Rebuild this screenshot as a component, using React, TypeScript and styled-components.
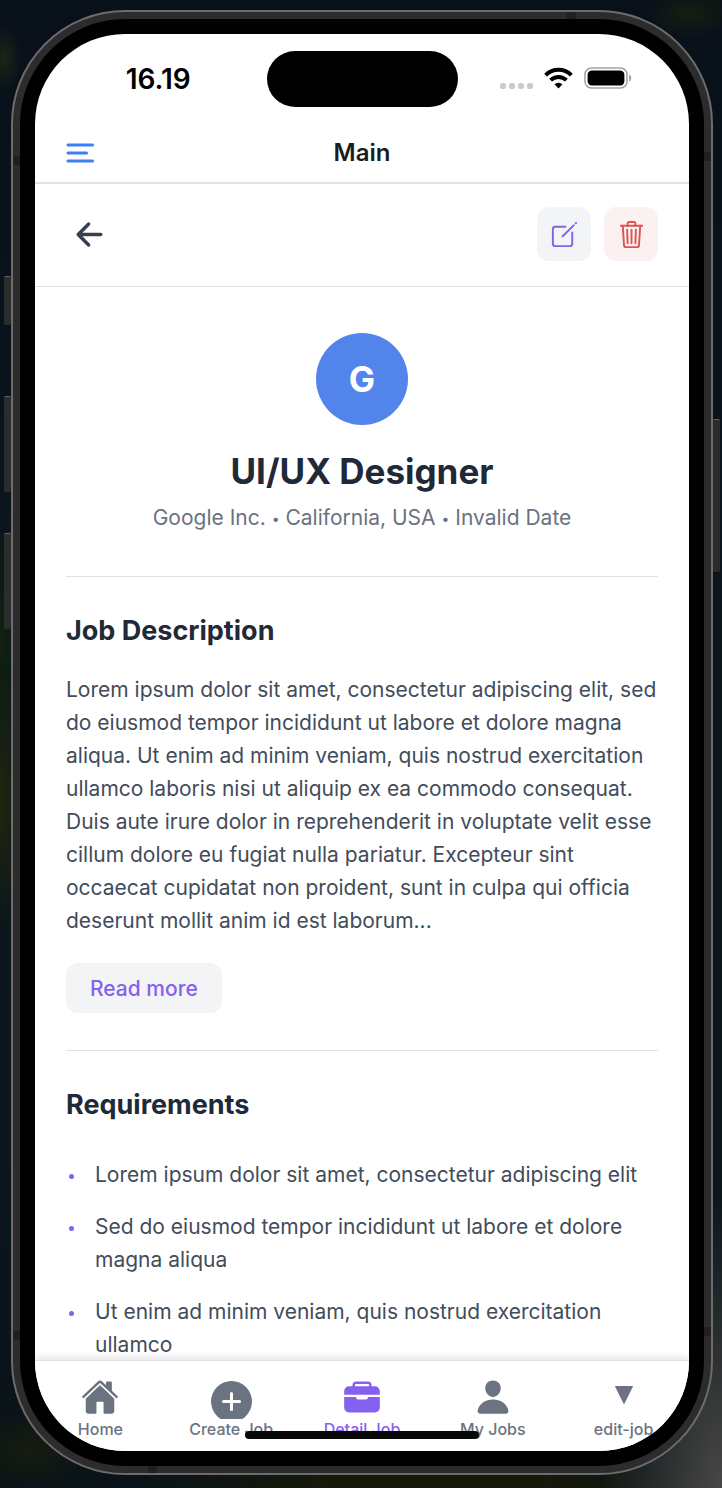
import React from "react";
import styled, { createGlobalStyle } from "styled-components";
import {
  IoArrowBack,
  IoBriefcase,
  IoCreateOutline,
  IoHome,
  IoPerson,
  IoTrashOutline,
} from "react-icons/io5";

const color = {
  ink: "#1f2937",
  body: "#424c5b",
  muted: "#6b7280",
  accent: "#8660ee",
  soft: "#f2f4f6",
  line: "#e0e2e6",
};

const GlobalStyle = createGlobalStyle`
  *, *::before, *::after { box-sizing: border-box; }
  body {
    margin: 0;
    font-family: Inter, "Liberation Sans", sans-serif;
    color: ${color.ink};
    background: #0a131a;
  }
  h1, h2, p, ul { margin: 0; padding: 0; }
  button { font: inherit; border: 0; padding: 0; cursor: pointer; }
`;

const Desktop = styled.div`
  height: 100vh;
  min-height: 900px;
  padding: 10px 9px 13px 11px;
  overflow: hidden;
  background:
    radial-gradient(ellipse 18px 34px at 4px 58px, #1a2615, transparent),
    radial-gradient(ellipse 46px 26px at 690px 14px, #171e10, transparent),
    radial-gradient(ellipse 26px 130px at 0 800px, #20260d, transparent),
    radial-gradient(ellipse 22px 110px at 0 640px, #10210f, transparent),
    radial-gradient(ellipse 60px 40px at 30px 1450px, #161c0d, transparent),
    radial-gradient(ellipse 120px 300px at 100% 100%, #484746, transparent),
    linear-gradient(90deg, transparent 20%, #16190a 45%, #16190a 75%, transparent) bottom / 100% 14px no-repeat,
    linear-gradient(#08101a, #0c171c 50%, #0a1418);
`;

const Frame = styled.div`
  position: relative;
  height: 100%;
  padding: 7px;
  border: 2px solid #6c6c6c;
  border-radius: 114px;
  background: #2c2c2c;
`;

const SideKey = styled.span<{ $side: "left" | "right"; $top: number; $length: number }>`
  position: absolute;
  ${(p) => p.$side}: -9px;
  top: ${(p) => p.$top}px;
  width: 7px;
  height: ${(p) => p.$length}px;
  border-top: 1px solid #666;
  border-radius: 2px;
  background: #2b2c2c;
`;

const Band = styled.span<{ $edge: "top" | "bottom" | "left" | "right"; $from: "top" | "bottom" | "left" | "right"; $at: number }>`
  position: absolute;
  ${(p) => p.$edge}: 0;
  ${(p) => p.$from}: ${(p) => p.$at}px;
  width: ${(p) => (p.$edge === "top" || p.$edge === "bottom" ? 9 : 7)}px;
  height: ${(p) => (p.$edge === "top" || p.$edge === "bottom" ? 7 : 9)}px;
  background: #202020;
`;

const Bezel = styled.div`
  height: 100%;
  padding: 15px;
  border-radius: 105px;
  background: #000;
`;

const Screen = styled.div`
  position: relative;
  display: flex;
  flex-direction: column;
  height: 100%;
  overflow: hidden;
  border-radius: 90px;
  background: #fff;
`;

const StatusBar = styled.div`
  flex: none;
  display: grid;
  grid-template-columns: 1fr auto 1fr;
  align-items: center;
  padding: 17px 0 16px;
`;

const Clock = styled.time`
  padding-left: 15px;
  text-align: center;
  font-size: 28px;
  line-height: 34px;
  font-weight: 600;
  color: #000;
`;

const Island = styled.div`
  width: 191px;
  height: 56px;
  border-radius: 28px;
  background: #000;
`;

const Indicators = styled.div`
  display: flex;
  align-items: center;
  justify-content: center;
  gap: 11px;
  padding: 0 14px 2px 0;
`;

const SignalDots = styled.div`
  display: flex;
  align-self: flex-end;
  gap: 3px;
`;

const SignalDot = styled.span`
  width: 6px;
  height: 6px;
  border-radius: 2px;
  background: #cbcbcb;
`;

const AppHeader = styled.header`
  flex: none;
  display: grid;
  grid-template-columns: 1fr auto 1fr;
  align-items: center;
  height: 61px;
  padding: 0 31px;
  border-bottom: 2px solid #e2e2e2;
`;

const MenuButton = styled.button`
  display: flex;
  justify-self: start;
  background: none;
`;

const HeaderTitle = styled.p`
  font-size: 24px;
  line-height: 30px;
  font-weight: 600;
  color: #1c1c1e;
`;

const Toolbar = styled.div`
  flex: none;
  display: flex;
  align-items: center;
  justify-content: space-between;
  padding: 23px 31px 25px;
  border-bottom: 1px solid ${color.line};
`;

const ToolGroup = styled.div`
  display: flex;
  gap: 13px;
`;

const ToolButton = styled.button<{ $tone?: "edit" | "danger" }>`
  display: flex;
  align-items: center;
  justify-content: center;
  width: ${(p) => (p.$tone ? 54 : 46)}px;
  height: 54px;
  border-radius: 12px;
  font-size: ${(p) => (p.$tone ? 31 : 37)}px;
  color: ${(p) => (p.$tone === "edit" ? color.accent : p.$tone === "danger" ? "#dc5450" : "#374151")};
  background: ${(p) => (p.$tone === "edit" ? color.soft : p.$tone === "danger" ? "#fcf1f1" : "transparent")};
`;

const Content = styled.main`
  flex: 1;
  min-height: 0;
  padding: 0 31px;
  overflow: hidden;
`;

const Hero = styled.section`
  display: flex;
  flex-direction: column;
  align-items: center;
  padding: 46px 0 43px;
  text-align: center;
`;

const Avatar = styled.div`
  display: flex;
  align-items: center;
  justify-content: center;
  width: 92px;
  height: 92px;
  border-radius: 50%;
  background: #5284ec;
  color: #fff;
  font-size: 35px;
  font-weight: 700;
`;

const JobTitle = styled.h1`
  margin-top: 24px;
  font-size: 35px;
  line-height: 44px;
  font-weight: 700;
`;

const Meta = styled.p`
  margin-top: 10px;
  font-size: 21px;
  line-height: 30px;
  color: ${color.muted};
`;

const Separator = styled.span`
  font-size: 14px;
  line-height: 1;
  vertical-align: middle;
`;

const Section = styled.section`
  padding: 36px 0 37px;
  border-top: 1px solid ${color.line};
`;

const SectionTitle = styled.h2`
  font-size: 27px;
  line-height: 36px;
  font-weight: 700;
`;

const Description = styled.p`
  margin-top: 24px;
  font-size: 21px;
  line-height: 33px;
  color: ${color.body};
`;

const ReadMore = styled.button`
  height: 50px;
  margin-top: 26px;
  padding: 0 24px;
  border-radius: 12px;
  background: ${color.soft};
  color: ${color.accent};
  font-size: 21px;
  font-weight: 500;
`;

const Requirements = styled.ul`
  display: flex;
  flex-direction: column;
  gap: 19px;
  margin-top: 35px;
  list-style: none;
`;

const Requirement = styled.li`
  display: flex;
  gap: 21px;
  padding-left: 3px;
  font-size: 21px;
  line-height: 33px;
  color: ${color.body};

  &::before {
    content: "";
    flex: none;
    width: 5px;
    height: 5px;
    margin-top: 16px;
    border-radius: 50%;
    background: ${color.accent};
  }
`;

const TabBar = styled.nav`
  position: relative;
  flex: none;
  display: flex;
  height: 91px;
  padding-top: 17px;
  border-top: 1px solid #e2e3e8;
  background: #fff;
  box-shadow: 0 -2px 8px rgba(0, 0, 0, 0.12);
`;

const Tab = styled.a<{ $active?: boolean }>`
  flex: 1;
  display: flex;
  flex-direction: column;
  align-items: center;
  color: ${(p) => (p.$active ? color.accent : color.muted)};
  font-size: 16px;
  line-height: 20px;
  font-weight: 500;
  text-decoration: none;
`;

const TabIcon = styled.span`
  display: flex;
  justify-content: center;
  height: 41px;
  font-size: 38px;
`;

const HomeIndicator = styled.div`
  position: absolute;
  bottom: 12px;
  left: 50%;
  width: 234px;
  height: 8px;
  margin-left: -117px;
  border-radius: 4px;
  background: #070707;
`;

const WifiIcon = () => (
  <svg width="29" height="22" viewBox="0 0 29 22" aria-label="Wi-Fi">
    <g fill="none" stroke="#000" strokeWidth="4">
      <path d="M1.6 8.1a18.4 18.4 0 0 1 25.8 0" />
      <path d="M6.6 13.1a11.3 11.3 0 0 1 15.8 0" />
    </g>
    <path d="M14.5 21.5l-4-4.2a5.8 5.8 0 0 1 8 0z" />
  </svg>
);

const BatteryIcon = () => (
  <svg width="48" height="22" viewBox="0 0 48 22" aria-label="Battery full">
    <rect x="1" y="1" width="42" height="20" rx="6.5" fill="none" stroke="#a4a4a4" strokeWidth="1.6" />
    <rect x="3.6" y="3.6" width="36.8" height="14.8" rx="4.2" />
    <path d="M45 7.5c3 1 3 6 0 7z" fill="#a4a4a4" />
  </svg>
);

const MenuIcon = () => (
  <svg width="28" height="20" viewBox="0 0 28 20" aria-hidden="true">
    <path d="M2 2h24.500M2 10h18.500M2 18h24.500" stroke="#3b7ff6" strokeWidth="3" strokeLinecap="round" />
  </svg>
);

const AddIcon = () => (
  <svg width="41" height="41" viewBox="0 -3 41 41" aria-hidden="true">
    <circle cx="20.5" cy="20.5" r="20.5" fill="currentColor" />
    <path d="M20.5 12.5v16M12.5 20.5h16" stroke="#fff" strokeWidth="3" strokeLinecap="round" />
  </svg>
);

const TriangleIcon = () => (
  <svg width="20" height="38" viewBox="0 -8 20 38" aria-hidden="true">
    <path d="M.8 0h18.4L10 18.6z" fill="currentColor" />
  </svg>
);

const requirements = [
  "Lorem ipsum dolor sit amet, consectetur adipiscing elit",
  "Sed do eiusmod tempor incididunt ut labore et dolore magna aliqua",
  "Ut enim ad minim veniam, quis nostrud exercitation ullamco",
];

const tabs = [
  { label: "Home", icon: <IoHome /> },
  { label: "Create Job", icon: <AddIcon /> },
  { label: "Detail Job", icon: <IoBriefcase />, active: true },
  { label: "My Jobs", icon: <IoPerson /> },
  { label: "edit-job", icon: <TriangleIcon /> },
];

export default function App() {
  return (
    <>
      <GlobalStyle />
      <Desktop>
        <Frame>
          <SideKey $side="left" $top={264} $length={49} />
          <SideKey $side="left" $top={384} $length={96} />
          <SideKey $side="left" $top={521} $length={96} />
          <SideKey $side="right" $top={407} $length={153} />
          <Band $edge="top" $from="right" $at={135} />
          <Band $edge="bottom" $from="left" $at={135} />
          <Band $edge="left" $from="top" $at={144} />
          <Band $edge="right" $from="top" $at={140} />
          <Band $edge="left" $from="bottom" $at={133} />
          <Band $edge="right" $from="bottom" $at={137} />
          <Bezel>
            <Screen>
              <StatusBar>
                <Clock>16.19</Clock>
                <Island />
                <Indicators>
                  <SignalDots>
                    <SignalDot />
                    <SignalDot />
                    <SignalDot />
                    <SignalDot />
                  </SignalDots>
                  <WifiIcon />
                  <BatteryIcon />
                </Indicators>
              </StatusBar>

              <AppHeader>
                <MenuButton type="button" aria-label="Open menu">
                  <MenuIcon />
                </MenuButton>
                <HeaderTitle>Main</HeaderTitle>
              </AppHeader>

              <Toolbar>
                <ToolButton type="button" aria-label="Back">
                  <IoArrowBack />
                </ToolButton>
                <ToolGroup>
                  <ToolButton type="button" $tone="edit" aria-label="Edit job">
                    <IoCreateOutline />
                  </ToolButton>
                  <ToolButton type="button" $tone="danger" aria-label="Delete job">
                    <IoTrashOutline />
                  </ToolButton>
                </ToolGroup>
              </Toolbar>

              <Content>
                <Hero>
                  <Avatar>G</Avatar>
                  <JobTitle>UI/UX Designer</JobTitle>
                  <Meta>
                    Google Inc. <Separator>•</Separator> California, USA <Separator>•</Separator>{" "}
                    Invalid Date
                  </Meta>
                </Hero>
                <Section>
                  <SectionTitle>Job Description</SectionTitle>
                  <Description>
                    Lorem ipsum dolor sit amet, consectetur adipiscing elit, sed do eiusmod tempor
                    incididunt ut labore et dolore magna aliqua. Ut enim ad minim veniam, quis
                    nostrud exercitation ullamco laboris nisi ut aliquip ex ea commodo consequat.
                    Duis aute irure dolor in reprehenderit in voluptate velit esse cillum dolore eu
                    fugiat nulla pariatur. Excepteur sint occaecat cupidatat non proident, sunt in
                    culpa qui officia deserunt mollit anim id est laborum...
                  </Description>
                  <ReadMore type="button">Read more</ReadMore>
                </Section>
                <Section>
                  <SectionTitle>Requirements</SectionTitle>
                  <Requirements>
                    {requirements.map((text) => (
                      <Requirement key={text}>{text}</Requirement>
                    ))}
                  </Requirements>
                </Section>
              </Content>

              <TabBar>
                {tabs.map((tab) => (
                  <Tab key={tab.label} href="#" $active={tab.active}>
                    <TabIcon>{tab.icon}</TabIcon>
                    {tab.label}
                  </Tab>
                ))}
              </TabBar>
              <HomeIndicator />
            </Screen>
          </Bezel>
        </Frame>
      </Desktop>
    </>
  );
}
